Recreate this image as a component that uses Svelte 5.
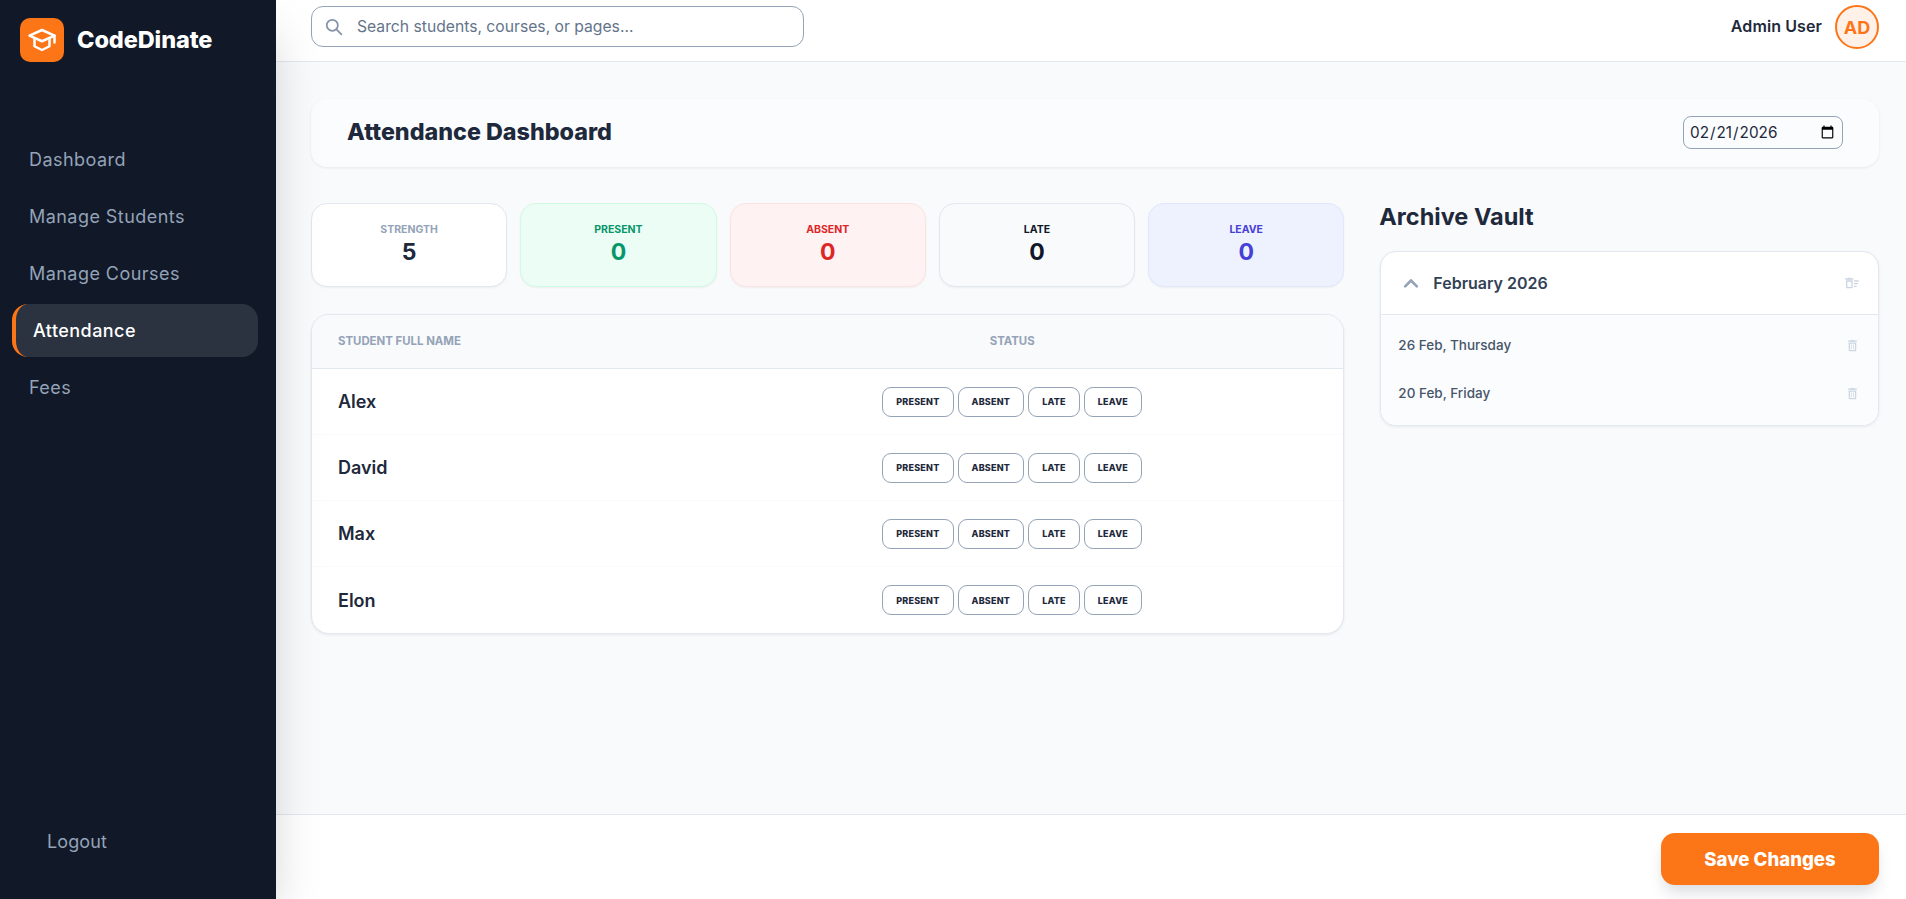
<script>
  const navItems = ['Dashboard', 'Manage Students', 'Manage Courses', 'Attendance', 'Fees'];
  const stats = [
    { label: 'Strength', value: 5, kind: 'plain' },
    { label: 'Present', value: 0, kind: 'present' },
    { label: 'Absent', value: 0, kind: 'absent' },
    { label: 'Late', value: 0, kind: 'late' },
    { label: 'Leave', value: 0, kind: 'leave' }
  ];
  const students = ['Alex', 'David', 'Max', 'Elon'];
  const statuses = ['Present', 'Absent', 'Late', 'Leave'];
  const archive = ['26 Feb, Thursday', '20 Feb, Friday'];
</script>

<div class="shell">
  <aside class="sidebar">
    <div class="brand">
      <div class="logo">
        <svg viewBox="0 0 24 24" width="30" height="30" fill="none" stroke="#fff" stroke-width="2" stroke-linejoin="round" stroke-linecap="round">
          <path d="M12 4 2 8.500 12 13l10-4.500z" />
          <path d="M6 11v6l6 3 6-3v-6" />
          <path d="M22 8.500V14" />
        </svg>
      </div>
      <span class="brand-name">CodeDinate</span>
    </div>

    <nav class="nav">
      {#each navItems as item}
        <a href="#top" class="nav-item {item === 'Attendance' ? 'active' : ''}">{item}</a>
      {/each}
    </nav>

    <a href="#top" class="logout">Logout</a>
  </aside>

  <div class="content">
    <header class="topbar">
      <div class="search">
        <svg viewBox="0 0 24 24" width="19" height="19" fill="none" stroke="#8492a8" stroke-width="2.200" stroke-linecap="round">
          <circle cx="10.500" cy="10.500" r="7" />
          <path d="m16 16 6 6" />
        </svg>
        <input type="text" placeholder="Search students, courses, or pages..." />
      </div>
      <div class="user">
        <span class="user-name">Admin User</span>
        <div class="avatar">AD</div>
      </div>
    </header>

    <main class="main">
      <section class="title-card">
        <h1>Attendance Dashboard</h1>
        <input class="date" type="date" value="2026-02-21" />
      </section>

      <div class="columns">
        <div class="left">
          <div class="stats">
            {#each stats as stat}
              <div class="stat {stat.kind}">
                <span class="stat-label">{stat.label}</span>
                <span class="stat-value">{stat.value}</span>
              </div>
            {/each}
          </div>

          <div class="table">
            <div class="table-head">
              <span>Student Full Name</span>
              <span class="center">Status</span>
            </div>
            {#each students as student}
              <div class="table-row">
                <span class="student">{student}</span>
                <div class="status-btns">
                  {#each statuses as status}
                    <button class="status-btn">{status}</button>
                  {/each}
                </div>
              </div>
            {/each}
          </div>
        </div>

        <div class="right">
          <h2>Archive Vault</h2>
          <div class="vault">
            <div class="vault-head">
              <svg class="chevron" viewBox="0 0 24 24" width="20" height="20" fill="none" stroke="#94a3b8" stroke-width="3.200" stroke-linecap="round" stroke-linejoin="round">
                <path d="m5 16 7-7 7 7" />
              </svg>
              <span class="month">February 2026</span>
              <svg class="sweep" viewBox="0 0 24 24" width="16" height="16" fill="#cbd5e1">
                <path d="M15 16h4v2h-4zm0-8h7v2h-7zm0 4h6v2h-6zM3 18c0 1.100.9 2 2 2h6c1.100 0 2-.9 2-2V8H3v10zm2-8h6v8H5v-8zm5-6H6L5 5H2v2h12V5h-3z" />
              </svg>
            </div>
            <div class="vault-list">
              {#each archive as day}
                <div class="vault-item">
                  <span>{day}</span>
                  <svg viewBox="0 0 24 24" width="15" height="15" fill="#cbd5e1">
                    <path d="M6 19c0 1.100.9 2 2 2h8c1.100 0 2-.9 2-2V7H6v12zM8 9h8v10H8V9zm7.500-5-1-1h-5l-1 1H5v2h14V4h-3.500z" />
                    <path d="M10 10.500h1.200v7H10zM12.800 10.500H14v7h-1.200z" />
                  </svg>
                </div>
              {/each}
            </div>
          </div>
        </div>
      </div>
    </main>

    <footer class="footer">
      <button class="save">Save Changes</button>
    </footer>
  </div>
</div>

<style>
  :global(body) {
    margin: 0;
    font-family: Inter, "Noto Sans", sans-serif;
    color: #1e293b;
  }

  .shell {
    display: flex;
    height: 899px;
    overflow: hidden;
    background: #f9fafb;
  }

  .sidebar {
    width: 276px;
    flex-shrink: 0;
    background: #111827;
    display: flex;
    flex-direction: column;
    box-shadow: 0 25px 50px -12px rgba(0, 0, 0, 0.25);
    z-index: 2;
  }

  .brand {
    display: flex;
    align-items: center;
    gap: 13px;
    padding: 18px 20px 0;
  }

  .logo {
    width: 44px;
    height: 44px;
    border-radius: 10px;
    background: #fc7516;
    display: flex;
    align-items: center;
    justify-content: center;
  }

  .brand-name {
    font-size: 23.500px;
    font-weight: 800;
    letter-spacing: -0.1px;
    color: #fff;
    padding-bottom: 2px;
  }

  .nav {
    display: flex;
    flex-direction: column;
    gap: 4px;
    padding: 71px 18px 0 12px;
    flex: 1;
  }

  .nav-item {
    height: 53px;
    display: flex;
    align-items: center;
    padding-left: 17px;
    border-radius: 16px;
    font-size: 18px;
    letter-spacing: 0.45px;
    color: #94a3b8;
    text-decoration: none;
  }

  .nav-item.active {
    background: #2b3341;
    border-left: 4px solid #fc7516;
    color: #fff;
    font-weight: 500;
  }

  .logout {
    padding: 0 0 47px 47px;
    font-size: 18px;
    letter-spacing: 0.1px;
    color: #94a3b8;
    text-decoration: none;
  }

  .content {
    flex: 1;
    min-width: 0;
    display: flex;
    flex-direction: column;
  }

  .topbar {
    height: 62px;
    box-sizing: border-box;
    flex-shrink: 0;
    background: #fff;
    border-bottom: 1px solid #e2e8f0;
    display: flex;
    align-items: center;
    justify-content: space-between;
    padding: 0 27px 7px 35px;
  }

  .search {
    width: 493px;
    height: 41px;
    margin-bottom: 2px;
    box-sizing: border-box;
    border: 1px solid #94a3b8;
    border-radius: 12px;
    display: flex;
    align-items: center;
    gap: 12px;
    padding: 0 12px;
  }

  .search input {
    flex: 1;
    border: none;
    outline: none;
    font: inherit;
    font-size: 15.700px;
    background: transparent;
  }

  .search input::placeholder {
    color: #64748b;
  }

  .user {
    display: flex;
    align-items: center;
    gap: 13px;
  }

  .user-name {
    font-size: 16px;
    font-weight: 600;
    letter-spacing: 0.1px;
    padding-bottom: 2px;
  }

  .avatar {
    width: 44px;
    height: 44px;
    box-sizing: border-box;
    border-radius: 50%;
    border: 2px solid #fc7516;
    background: #fff1e8;
    color: #fc7516;
    font-weight: 700;
    font-size: 18px;
    display: flex;
    align-items: center;
    justify-content: center;
  }

  .main {
    flex: 1;
    min-height: 0;
    padding: 37px 27px 0 35px;
  }

  .title-card {
    height: 68px;
    box-sizing: border-box;
    background: #fbfcfe;
    border-radius: 16px;
    box-shadow: 0 1px 3px rgba(15, 23, 42, 0.08);
    display: flex;
    align-items: center;
    justify-content: space-between;
    padding: 0 36px;
  }

  h1 {
    margin: 0 0 3px;
    font-size: 23.300px;
    font-weight: 800;
  }

  .date {
    width: 160px;
    height: 33px;
    margin-bottom: 1px;
    box-sizing: border-box;
    border: 1px solid #94a3b8;
    border-radius: 8px;
    background: transparent;
    color: #1e293b;
    font: inherit;
    font-size: 15.300px;
    padding: 0 5px;
  }

  .columns {
    display: grid;
    grid-template-columns: repeat(3, minmax(0, 1fr));
    column-gap: 36px;
    margin-top: 36px;
  }

  .left {
    grid-column: span 2;
    display: flex;
    flex-direction: column;
    gap: 27px;
  }

  .stats {
    display: grid;
    grid-template-columns: repeat(5, minmax(0, 1fr));
    gap: 13px;
  }

  .stat {
    height: 84px;
    box-sizing: border-box;
    padding-bottom: 1px;
    border: 1px solid #e2e8f0;
    border-radius: 16px;
    display: flex;
    flex-direction: column;
    align-items: center;
    justify-content: center;
    box-shadow: 0 1px 2px rgba(15, 23, 42, 0.05);
  }

  .stat-label {
    font-size: 10.500px;
    font-weight: 700;
    text-transform: uppercase;
  }

  .stat-value {
    font-size: 23px;
    font-weight: 700;
    margin-top: 2px;
  }

  .plain {
    background: #fff;
  }

  .plain .stat-label {
    color: #94a3b8;
  }

  .present {
    background: #ecfdf5;
    border-color: #d1fae5;
    color: #059669;
  }

  .absent {
    background: #fef2f2;
    border-color: #fee2e2;
    color: #dc2626;
  }

  .late {
    background: #f9fafb;
    color: #0f172a;
  }

  .leave {
    background: #eef2ff;
    border-color: #e0e7ff;
    color: #4740d6;
  }

  .table {
    background: #fff;
    border: 1px solid #e2e8f0;
    border-radius: 18px;
    overflow: hidden;
    box-shadow: 0 1px 3px rgba(15, 23, 42, 0.08);
  }

  .table-head,
  .table-row {
    display: grid;
    grid-template-columns: 343px 1fr;
    align-items: center;
    padding-left: 26px;
    box-sizing: border-box;
  }

  .table-head {
    height: 54px;
    padding-bottom: 2px;
    background: #f9fafb;
    border-bottom: 1px solid #e2e8f0;
    font-size: 11.400px;
    font-weight: 700;
    text-transform: uppercase;
    color: #94a3b8;
  }

  .center {
    text-align: center;
  }

  .table-row {
    height: 66px;
    border-bottom: 1px solid #f8fafc;
  }

  .table-row:last-child {
    border-bottom: none;
  }

  .student {
    font-size: 18px;
    font-weight: 600;
  }

  .status-btns {
    display: flex;
    justify-content: center;
    gap: 4px;
  }

  .status-btn {
    height: 30px;
    padding: 0 13px;
    border: 1px solid #94a3b8;
    border-radius: 9px;
    background: #fff;
    color: #1e293b;
    font-family: inherit;
    font-size: 9px;
    font-weight: 800;
    letter-spacing: 0.22px;
    text-transform: uppercase;
  }

  .right h2 {
    margin: 0 0 20px -1px;
    font-size: 23.500px;
    font-weight: 700;
    line-height: 28px;
  }

  .vault {
    background: #fff;
    border: 1px solid #e2e8f0;
    border-radius: 16px;
    overflow: hidden;
    box-shadow: 0 1px 3px rgba(15, 23, 42, 0.08);
  }

  .vault-head {
    height: 63px;
    box-sizing: border-box;
    display: flex;
    align-items: center;
    padding: 0 18px 0 20px;
    border-bottom: 1px solid #e2e8f0;
  }

  .month {
    margin-left: 12px;
    flex: 1;
    font-size: 16px;
    font-weight: 600;
    color: #334155;
  }

  .vault-list {
    background: #fbfcfe;
    padding: 6px 0 8px;
  }

  .vault-item {
    height: 48px;
    display: flex;
    align-items: center;
    justify-content: space-between;
    padding: 0 18px 0 17px;
    font-size: 13.500px;
    font-weight: 500;
    color: #475569;
  }

  .footer {
    height: 85px;
    flex-shrink: 0;
    box-sizing: border-box;
    background: #fff;
    border-top: 1px solid #e2e8f0;
    display: flex;
    align-items: center;
    justify-content: flex-end;
    padding: 3px 27px 0 0;
  }

  .save {
    width: 218px;
    height: 52px;
    border: none;
    border-radius: 14px;
    background: #fc7516;
    color: #fff;
    font-family: inherit;
    font-size: 18.600px;
    font-weight: 800;
    box-shadow: 0 10px 15px -3px rgba(15, 23, 42, 0.15);
  }
</style>
